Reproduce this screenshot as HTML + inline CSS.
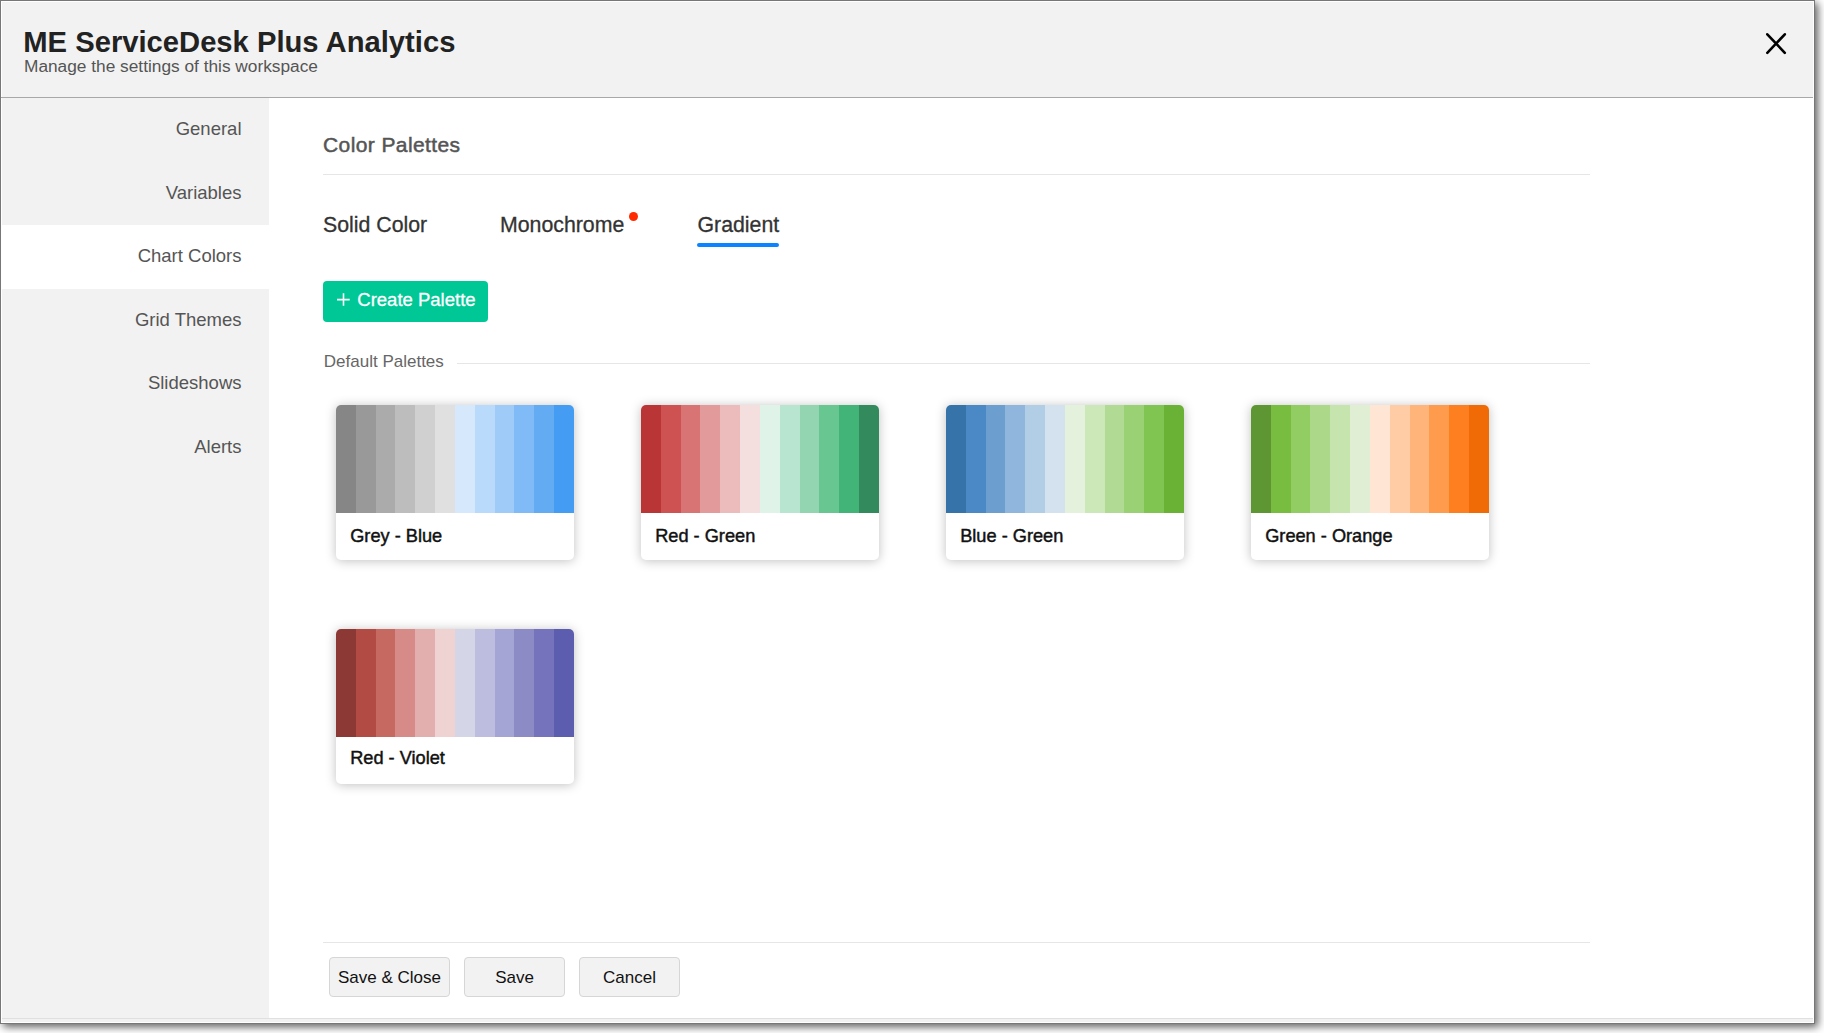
<!DOCTYPE html>
<html><head><meta charset="utf-8"><style>
html,body{margin:0;padding:0;width:1824px;height:1033px;overflow:hidden;background:#fff;}
body{position:relative;font-family:"Liberation Sans", sans-serif;}
.t{position:absolute;white-space:nowrap;}
.abs{position:absolute;}
.card{position:absolute;width:238px;height:154.6px;background:#fff;border-radius:5px;box-shadow:0 1px 11px rgba(0,0,0,0.25);overflow:hidden;}
.sw{position:absolute;left:0;top:0;width:238px;height:107.6px;display:flex;}
.sw i{flex:1;display:block;}
.btn{position:absolute;top:957px;height:40px;background:#f2f2f2;border:1px solid #d6d6d6;box-sizing:border-box;border-radius:4px;}
</style></head><body>
<div class="abs" style="left:0;top:0;width:1815px;height:1024px;box-shadow:3px 3px 8px rgba(0,0,0,0.62);"></div>
<div class="abs" style="left:0;top:0;width:1815px;height:1024px;background:#777;"></div>
<div class="abs" style="left:1px;top:1px;width:1813px;height:1022px;background:#fff;"></div>
<div class="abs" style="left:2px;top:2px;width:1811px;height:95px;background:#f2f2f2;"></div>
<div class="abs" style="left:1px;top:97px;width:1812px;height:1px;background:#a8a8a8;"></div>
<div class="abs" style="left:2px;top:98px;width:267px;height:920px;background:#f2f2f2;"></div>
<div class="abs" style="left:2px;top:225px;width:267px;height:64px;background:#fff;"></div>
<div class="abs" style="left:2px;top:1018px;width:1811px;height:1px;background:#e0e0e0;"></div>
<div class="abs" style="left:2px;top:1019px;width:1811px;height:3px;background:#f2f2f2;"></div>
<div class="t" style="left:23.3px;top:28.08px;font-size:29.2px;line-height:29.2px;color:#222;font-weight:bold;">ME ServiceDesk Plus Analytics</div>
<div class="t" style="left:24px;top:57.76px;font-size:17.3px;line-height:17.3px;color:#555;font-weight:normal;">Manage the settings of this workspace</div>
<svg class="abs" style="left:1760px;top:27px" width="34" height="34" viewBox="1760 27 34 34"><path d="M1767.3 34.3L1784.8 52.8M1784.8 34.3L1767.3 52.8" stroke="#000" stroke-width="2.6" stroke-linecap="round" fill="none"/></svg>
<div class="t" style="right:1582.5px;text-align:right;top:120.14px;font-size:18.5px;line-height:18.5px;color:#555;font-weight:normal;">General</div>
<div class="t" style="right:1582.5px;text-align:right;top:183.74px;font-size:18.5px;line-height:18.5px;color:#555;font-weight:normal;">Variables</div>
<div class="t" style="right:1582.5px;text-align:right;top:247.34px;font-size:18.5px;line-height:18.5px;color:#555;font-weight:normal;">Chart Colors</div>
<div class="t" style="right:1582.5px;text-align:right;top:310.74px;font-size:18.5px;line-height:18.5px;color:#555;font-weight:normal;">Grid Themes</div>
<div class="t" style="right:1582.5px;text-align:right;top:374.14px;font-size:18.5px;line-height:18.5px;color:#555;font-weight:normal;">Slideshows</div>
<div class="t" style="right:1582.5px;text-align:right;top:437.64px;font-size:18.5px;line-height:18.5px;color:#555;font-weight:normal;">Alerts</div>
<div class="t" style="left:323px;top:134.02px;font-size:21px;line-height:21px;color:#555;font-weight:normal;-webkit-text-stroke:0.5px #555;letter-spacing:0.4px;">Color Palettes</div>
<div class="abs" style="left:323px;top:174px;width:1267px;height:1px;background:#e6e6e6;"></div>
<div class="t" style="left:323px;top:215.07px;font-size:21.3px;line-height:21.3px;color:#333;font-weight:normal;-webkit-text-stroke:0.3px #333;">Solid Color</div>
<div class="t" style="left:500px;top:215.07px;font-size:21.3px;line-height:21.3px;color:#333;font-weight:normal;-webkit-text-stroke:0.3px #333;">Monochrome</div>
<div class="t" style="left:697.5px;top:215.07px;font-size:21.3px;line-height:21.3px;color:#333;font-weight:normal;-webkit-text-stroke:0.3px #333;">Gradient</div>
<div class="abs" style="left:629px;top:212px;width:9px;height:9px;border-radius:50%;background:#ff2a00;"></div>
<div class="abs" style="left:697px;top:243px;width:82px;height:4px;border-radius:2px;background:#0a84ff;"></div>
<div class="abs" style="left:323px;top:281px;width:165px;height:40.6px;border-radius:4px;background:#00c796;"></div>
<svg class="abs" style="left:336px;top:292px" width="16" height="16" viewBox="0 0 16 16"><path d="M7.5 1.3V13.8M1 7.6H13.7" stroke="#fff" stroke-width="1.6" fill="none"/></svg>
<div class="t" style="left:357.3px;top:290.94px;font-size:18.5px;line-height:18.5px;color:#fff;font-weight:normal;-webkit-text-stroke:0.3px #fff;">Create Palette</div>
<div class="t" style="left:323.8px;top:353.21px;font-size:17px;line-height:17px;color:#666;font-weight:normal;">Default Palettes</div>
<div class="abs" style="left:457px;top:363px;width:1133px;height:1px;background:#e6e6e6;"></div>
<div class="card" style="left:336px;top:405px;"><div class="sw"><i style="background:#868686"></i><i style="background:#999999"></i><i style="background:#ababab"></i><i style="background:#bdbdbd"></i><i style="background:#d0d0d0"></i><i style="background:#e0e0e0"></i><i style="background:#d5e8fc"></i><i style="background:#b9dafb"></i><i style="background:#9fcbf9"></i><i style="background:#81bbf7"></i><i style="background:#63acf4"></i><i style="background:#449df2"></i></div></div>
<div class="t" style="left:350.2px;top:526.69px;font-size:18.2px;line-height:18.2px;color:#111;font-weight:normal;-webkit-text-stroke:0.45px #111;">Grey - Blue</div>
<div class="card" style="left:641px;top:405px;"><div class="sw"><i style="background:#ba3536"></i><i style="background:#cf5252"></i><i style="background:#d97474"></i><i style="background:#e39a9a"></i><i style="background:#ecbcbc"></i><i style="background:#f5dfde"></i><i style="background:#dff3e8"></i><i style="background:#b8e5d0"></i><i style="background:#92d5b0"></i><i style="background:#68c691"></i><i style="background:#42b477"></i><i style="background:#338b5d"></i></div></div>
<div class="t" style="left:655.2px;top:526.69px;font-size:18.2px;line-height:18.2px;color:#111;font-weight:normal;-webkit-text-stroke:0.45px #111;">Red - Green</div>
<div class="card" style="left:946px;top:405px;"><div class="sw"><i style="background:#3673a8"></i><i style="background:#4a89c6"></i><i style="background:#6c9fd0"></i><i style="background:#90b6dd"></i><i style="background:#b2cde6"></i><i style="background:#d4e2ef"></i><i style="background:#e4f2dd"></i><i style="background:#cce8b9"></i><i style="background:#b1db94"></i><i style="background:#9ad174"></i><i style="background:#80c552"></i><i style="background:#69b236"></i></div></div>
<div class="t" style="left:960.2px;top:526.69px;font-size:18.2px;line-height:18.2px;color:#111;font-weight:normal;-webkit-text-stroke:0.45px #111;">Blue - Green</div>
<div class="card" style="left:1251px;top:405px;"><div class="sw"><i style="background:#5f9634"></i><i style="background:#79bd40"></i><i style="background:#91cd63"></i><i style="background:#acd88a"></i><i style="background:#c6e4ae"></i><i style="background:#e0efd4"></i><i style="background:#ffe5d4"></i><i style="background:#ffcca6"></i><i style="background:#ffb47a"></i><i style="background:#ff9b4c"></i><i style="background:#fd7f20"></i><i style="background:#f06b05"></i></div></div>
<div class="t" style="left:1265.2px;top:526.69px;font-size:18.2px;line-height:18.2px;color:#111;font-weight:normal;-webkit-text-stroke:0.45px #111;">Green - Orange</div>
<div class="card" style="left:336px;top:629px;"><div class="sw"><i style="background:#8c3935"></i><i style="background:#b24b43"></i><i style="background:#c66960"></i><i style="background:#d68b88"></i><i style="background:#e2afae"></i><i style="background:#efd3d3"></i><i style="background:#d5d5e8"></i><i style="background:#bdbde0"></i><i style="background:#a4a5d4"></i><i style="background:#8d8bc6"></i><i style="background:#7573bb"></i><i style="background:#5d5daf"></i></div></div>
<div class="t" style="left:350.2px;top:749.39px;font-size:18.2px;line-height:18.2px;color:#111;font-weight:normal;-webkit-text-stroke:0.45px #111;">Red - Violet</div>
<div class="abs" style="left:323px;top:942px;width:1267px;height:1px;background:#e6e6e6;"></div>
<div class="btn" style="left:329px;width:121px;"></div>
<div class="btn" style="left:464px;width:101px;"></div>
<div class="btn" style="left:579px;width:101px;"></div>
<div class="t" style="left:329px;top:969.41px;font-size:17px;line-height:17px;color:#111;font-weight:normal;width:121px;text-align:center;">Save &amp; Close</div>
<div class="t" style="left:464px;top:969.41px;font-size:17px;line-height:17px;color:#111;font-weight:normal;width:101px;text-align:center;">Save</div>
<div class="t" style="left:579px;top:969.41px;font-size:17px;line-height:17px;color:#111;font-weight:normal;width:101px;text-align:center;">Cancel</div>
</body></html>
